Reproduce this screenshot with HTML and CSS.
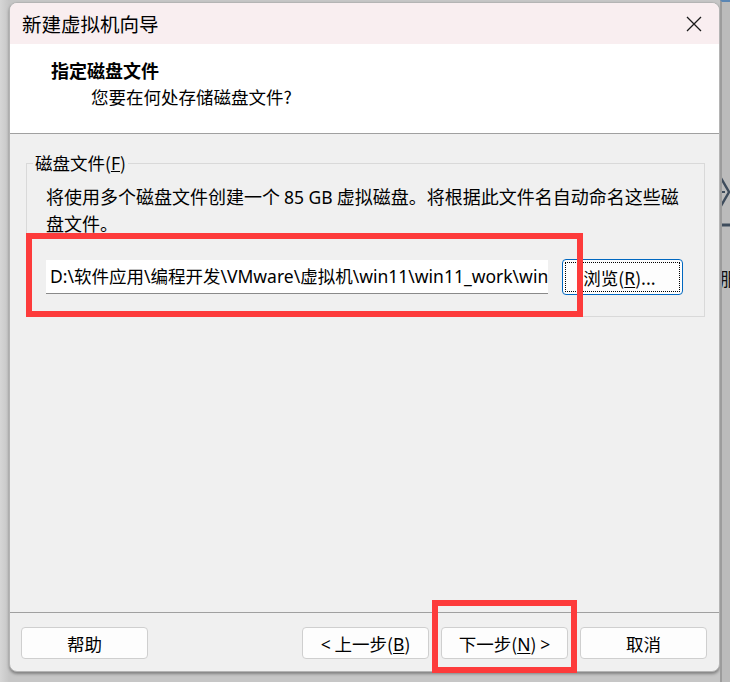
FILE: index.html
```html
<!DOCTYPE html>
<html lang="zh-CN">
<head>
<meta charset="utf-8">
<title>新建虚拟机向导</title>
<link rel="stylesheet" href="styles.css">
</head>
<body>
<div class="desk">
  <div class="dialog">
    <div class="titlebar">
      <span class="title">新建虚拟机向导</span>
      <svg class="close" width="16" height="16" viewBox="0 0 16 16"><path d="M1 1 L15 15 M15 1 L1 15" stroke="#1a1a1a" stroke-width="1.3" fill="none"/></svg>
    </div>
    <div class="header">
      <div class="h-title">指定磁盘文件</div>
      <div class="h-sub">您要在何处存储磁盘文件?</div>
    </div>
    <div class="content">
      <fieldset class="group">
        <legend>磁盘文件(<u class="lat">F</u>)</legend>
        <div class="gbody">
          <p class="desc"><span class="line">将使用多个磁盘文件创建一个 <span class="lat">85 GB</span> 虚拟磁盘。将根据此文件名自动命名这些磁</span><span class="line">盘文件。</span></p>
          <div class="row">
            <div class="path">D:\软件应用\编程开发\VMware\虚拟机\win11\win11_work\win</div>
            <button class="btn browse"><span class="focus"><span>浏览(<u class="lat">R</u>)...</span></span></button>
          </div>
        </div>
      </fieldset>
    </div>
    <div class="footer">
      <button class="btn"><span>帮助</span></button>
      <div class="spacer"></div>
      <button class="btn"><span><span class="lat">&lt;</span> 上一步(<u class="lat">B</u>)</span></button>
      <button class="btn"><span>下一步(<u class="lat">N</u>) <span class="lat">&gt;</span></span></button>
      <button class="btn"><span>取消</span></button>
    </div>
  </div>
  <div class="side">
    <svg class="side-icon" width="10" height="60" viewBox="0 0 10 60"><path d="M1 2 L9 16 L1 30" stroke="#3e4c5c" stroke-width="2.4" fill="none"/><path d="M0 16 H5" stroke="#3e4c5c" stroke-width="2"/><path d="M0 49 H10" stroke="#3e4c5c" stroke-width="3"/></svg>
    <div class="side-text">服</div>
  </div>
</div>
<div class="mark mark-path"></div>
<div class="mark mark-next"></div>
</body>
</html>
```

FILE: styles.css
```css
html, body {
  margin: 0;
  padding: 0;
}
body {
  width: 730px;
  height: 682px;
  overflow: hidden;
  position: relative;
  background: linear-gradient(90deg, #d6d6d6 0, #c6c6c6 9px, #c6c6c6 100%);
  font-family: "Noto Sans CJK SC", sans-serif;
  color: #000;
}
.lat {
  font-family: "Noto Sans", "Noto Sans CJK SC", sans-serif;
}
.desk {
  display: flex;
  height: 682px;
}
.dialog {
  box-sizing: border-box;
  margin: 2px 0 0 9px;
  width: 711px;
  height: 670px;
  border: 1px solid #b4b4b4;
  border-radius: 8px;
  background: #f0f0f0;
  box-shadow: 0 2px 3px rgba(0,0,0,0.35);
  display: flex;
  flex-direction: column;
  overflow: hidden;
}
.titlebar {
  height: 41px;
  flex: none;
  background: #f9eef0;
  display: flex;
  align-items: center;
  justify-content: space-between;
  padding: 0 17px 0 12px;
}
.title {
  font-size: 19.5px;
  line-height: 26px;
  margin-top: 1px;
}
.close {
  display: block;
  margin-top: 1px;
}
.header {
  height: 89px;
  flex: none;
  background: #fff;
  border-bottom: 1px solid #a0a0a0;
  box-sizing: content-box;
  padding: 0 0 0 41px;
}
.h-title {
  font-size: 18px;
  line-height: 24px;
  font-weight: bold;
  margin-top: 14px;
}
.h-sub {
  font-size: 17.5px;
  line-height: 24px;
  margin: 3px 0 0 40px;
}
.content {
  flex: 1;
  padding: 18px 14px 0 16px;
}
.group {
  margin: 0;
  border: 1px solid #d9d9d9;
  padding: 9px 0 21px 0;
}
.group legend {
  font-size: 17.5px;
  line-height: 22px;
  padding: 0 2px;
  margin-left: 6px;
}
.gbody {
  padding-left: 19px;
}
.desc {
  margin: 0;
  font-size: 18px;
  line-height: 26px;
}
.desc .line {
  display: block;
  white-space: nowrap;
}
.desc .lat {
  font-size: 17.5px;
}
.row {
  display: flex;
  align-items: center;
  gap: 14px;
  margin-top: 23px;
  height: 36px;
}
.path {
  box-sizing: border-box;
  width: 502px;
  height: 34px;
  background: #fff;
  border-bottom: 1px solid #8a8a8a;
  font-family: "Noto Sans", "Noto Sans CJK SC", sans-serif;
  font-size: 17.5px;
  line-height: 33px;
  padding-left: 4px;
  white-space: nowrap;
  overflow: hidden;
}
.btn {
  box-sizing: border-box;
  height: 32px;
  width: 127px;
  border: 1px solid #cfcfcf;
  border-radius: 4px;
  background: #fdfdfd;
  font-family: "Noto Sans CJK SC", sans-serif;
  font-size: 17.5px;
  color: #000;
  padding: 0;
  display: flex;
  align-items: center;
  justify-content: center;
  white-space: nowrap;
}
.btn u {
  text-underline-offset: 2px;
}
.browse {
  width: 121px;
  height: 36px;
  border: 1px solid #0067c0;
  padding: 2px;
}
.browse .focus {
  box-sizing: border-box;
  width: 100%;
  height: 100%;
  border: 1px dotted #000;
  display: flex;
  align-items: center;
  justify-content: center;
  padding-right: 6px;
}
.footer {
  flex: none;
  box-sizing: border-box;
  height: 59px;
  border-top: 1px solid #a0a0a0;
  display: flex;
  align-items: flex-start;
  gap: 12px;
  padding: 14px 12px 0 11px;
}
.spacer {
  flex: 1;
}
.side {
  width: 10px;
  flex: none;
  box-sizing: border-box;
  background: #bbbbbb;
  border-left: 2px solid #9c9c9c;
  border-top: 2px solid #5a86b4;
  overflow: hidden;
}
.side-icon {
  display: block;
  margin: 174px 0 0 -2px;
}
.side-text {
  margin: 31px 0 0 -2px;
  font-size: 18px;
  line-height: 22px;
  white-space: nowrap;
  color: #111;
}
.mark {
  position: absolute;
  box-sizing: border-box;
  border: 6px solid #fd3b3b;
}
.mark-path {
  left: 26px;
  top: 233px;
  width: 557px;
  height: 84px;
}
.mark-next {
  left: 432px;
  top: 600px;
  width: 145px;
  height: 73px;
}
```
